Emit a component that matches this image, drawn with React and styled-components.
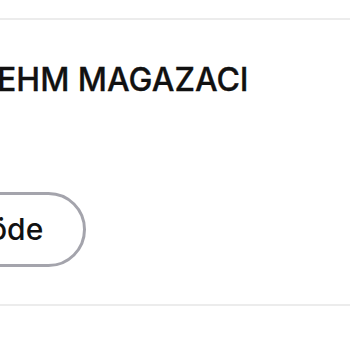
import React from "react";
import styled, { createGlobalStyle } from "styled-components";

const GlobalStyle = createGlobalStyle`
  html, body {
    margin: 0;
    padding: 0;
    background: #ffffff;
    font-family: Inter, "Noto Sans", sans-serif;
    color: #111;
  }
`;

const Page = styled.div`
  width: 350px;
  height: 350px;
  overflow: hidden;
  padding-top: 18px;
  box-sizing: border-box;
`;

const Card = styled.section`
  border-top: 2px solid #ececec;
  border-bottom: 2px solid #ececec;
  padding: 40px 0 37px;
  margin-left: -3px;
  display: flex;
  flex-direction: column;
  align-items: flex-start;
`;

const Title = styled.h2`
  margin: 0;
  font-size: 32px;
  line-height: 40px;
  font-weight: 500;
  letter-spacing: 0;
  white-space: nowrap;
  -webkit-text-stroke: 0.3px #111;
`;

const PayButton = styled.button`
  margin-top: 92px;
  margin-left: -71px;
  height: 75px;
  padding: 0 40px 2px 60px;
  border: 3px solid #a4a4ac;
  border-radius: 40px;
  background: #fff;
  font-family: inherit;
  font-size: 30px;
  font-weight: 500;
  color: #111;
  cursor: pointer;
`;

export default function App() {
  return (
    <>
      <GlobalStyle />
      <Page>
        <Card>
          <Title>EHM MAGAZACI</Title>
          <PayButton>öde</PayButton>
        </Card>
      </Page>
    </>
  );
}
